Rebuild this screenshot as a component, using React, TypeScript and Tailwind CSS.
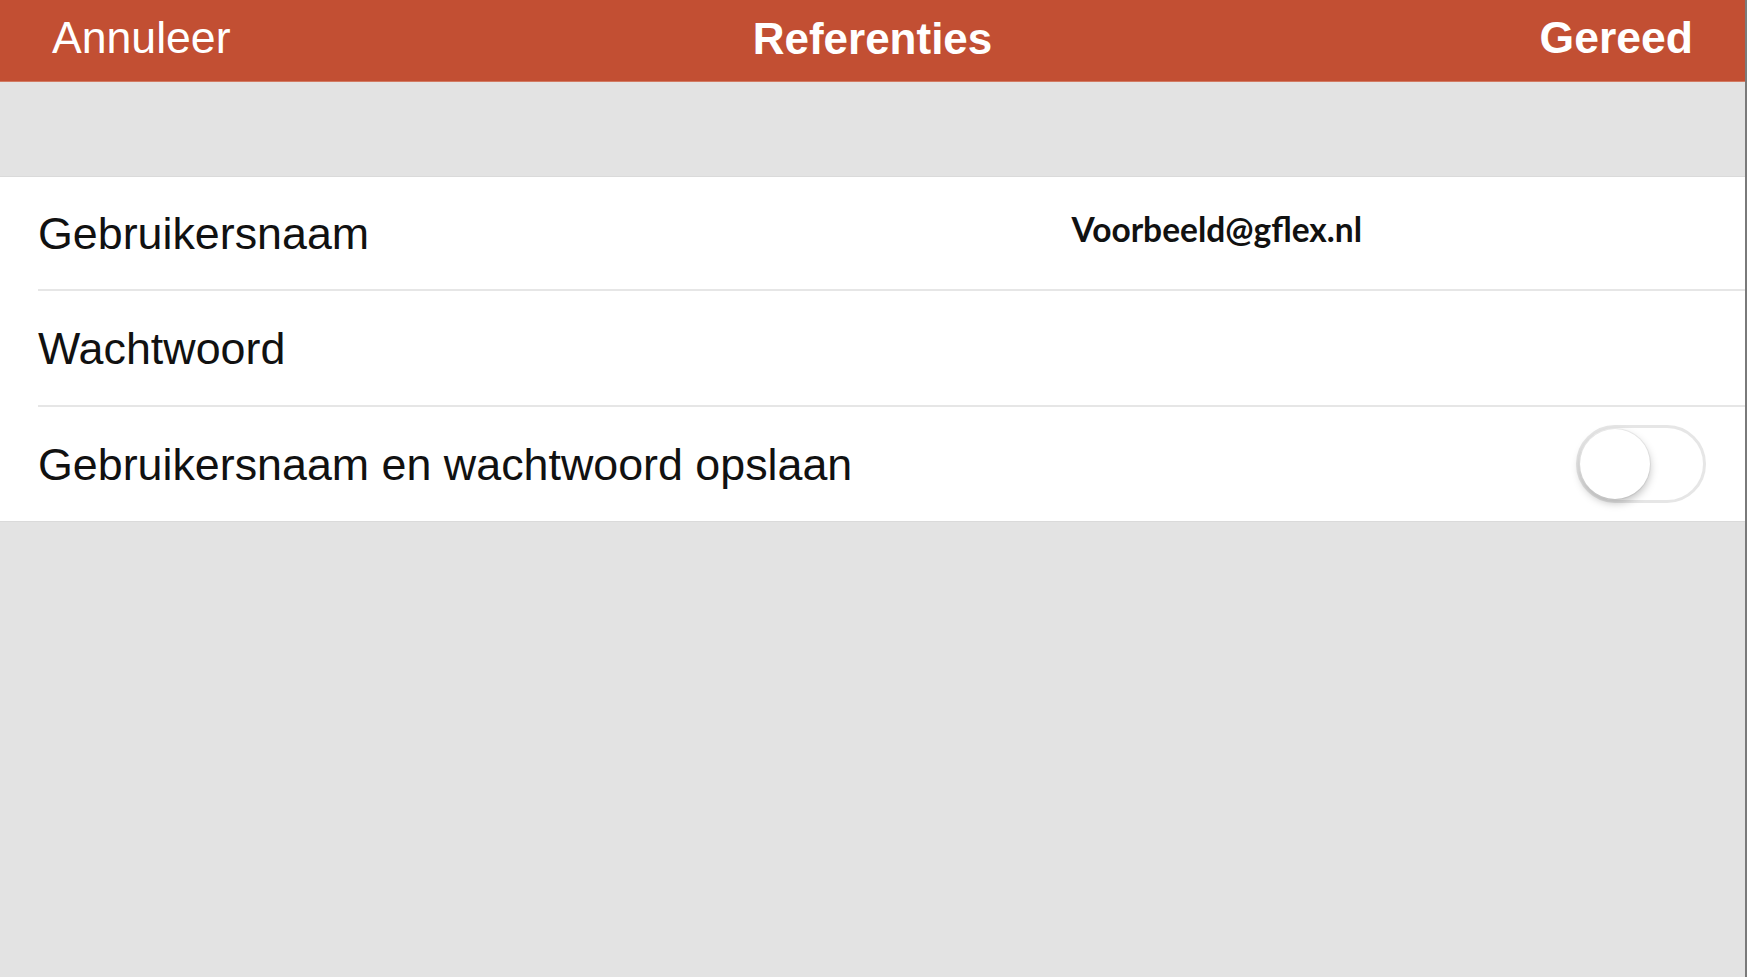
import React, { useState } from 'react';

const rowText = "text-[44.8px] text-[#111] leading-none";

export default function App() {
  const [save, setSave] = useState(false);

  return (
    <div
      className="min-h-screen w-full bg-[#e3e3e3] flex flex-col border-r-2 border-[#7a7a7a]"
      style={{ fontFamily: '"Liberation Sans", Arial, sans-serif' }}
    >
      <header className="h-[82px] bg-[#c24f33] border-b border-[#d27a62] flex items-center justify-between pl-[52px] pr-[52px] pb-[4px] text-white">
        <button className="text-[44.6px] leading-none font-normal w-[300px] text-left">Annuleer</button>
        <h1 className="text-[44px] leading-none font-bold">Referenties</h1>
        <button className="text-[44.5px] leading-none font-bold w-[300px] text-right">Gereed</button>
      </header>

      <div className="h-[94px]" />

      <div className="bg-white border-t border-b border-[#dadada]">
        <div className="h-[114px] flex items-center pl-[38px]">
          <div className="flex-1 flex items-center border-b-2 border-[#e6e6e6] h-full">
            <span className={rowText}>Gebruikersnaam</span>
            <span
              className="ml-auto mr-[383px] mb-[6px] text-[33.5px] font-bold text-[#111] leading-none"
              style={{ fontFamily: 'Lato, "Open Sans", sans-serif' }}
            >
              Voorbeeld@gflex.nl
            </span>
          </div>
        </div>
        <div className="h-[116px] flex items-center pl-[38px]">
          <div className="flex-1 flex items-center border-b-2 border-[#e6e6e6] h-full">
            <span className={rowText}>Wachtwoord</span>
          </div>
        </div>
        <div className="h-[114px] flex items-center pl-[38px] pr-[39px]">
          <span className={rowText}>Gebruikersnaam en wachtwoord opslaan</span>
          <button
            onClick={() => setSave(!save)}
            className={`ml-auto w-[130px] h-[78px] rounded-full border-[3px] flex items-center px-[1px] ${
              save ? 'bg-[#4cd964] border-[#4cd964] justify-end' : 'bg-white border-[#e6e6e6] justify-start'
            }`}
          >
            <span className="w-[70px] h-[70px] rounded-full bg-white shadow-[0_4px_8px_rgba(0,0,0,0.25),0_0_0_1px_rgba(0,0,0,0.06)]" />
          </button>
        </div>
      </div>

      <div className="flex-1" />
    </div>
  );
}
